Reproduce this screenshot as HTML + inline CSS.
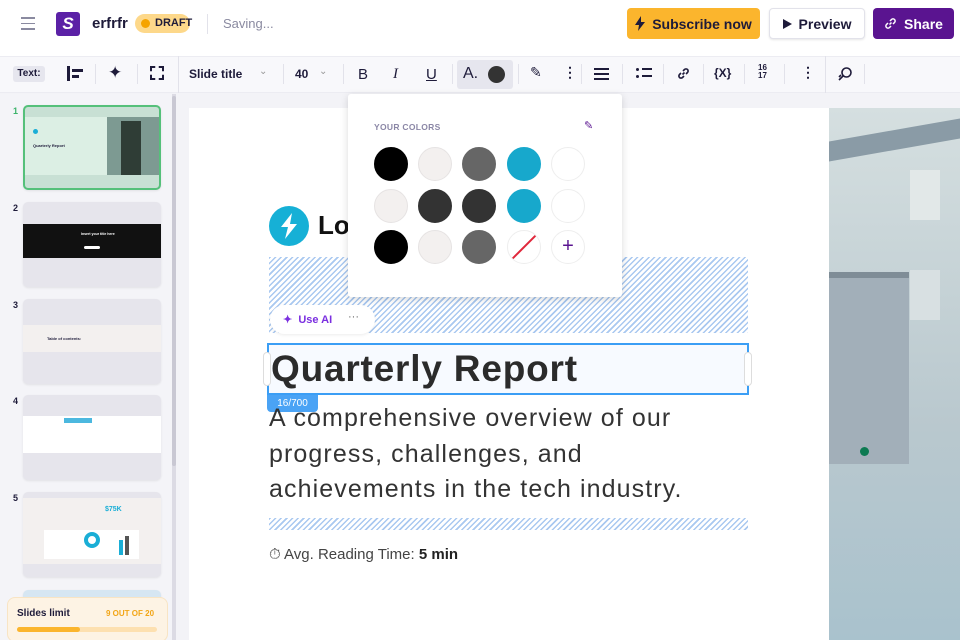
<!DOCTYPE html>
<html style="width:960px;height:640px;overflow:hidden"><head><meta charset="utf-8"><style>
*{box-sizing:border-box;margin:0;padding:0}
body{width:960px;height:640px;overflow:hidden;position:relative;font-family:"Liberation Sans",sans-serif;background:#f3f3f7;color:#1e1b3a}
.abs{position:absolute}
.top{left:0;top:0;width:960px;height:56px;background:#fff}
.tb{left:0;top:56px;width:960px;height:37px;background:#f8f8fb;border-top:1px solid #ececf2;border-bottom:1px solid #ececf2}
.btn{position:absolute;top:8px;height:31px;border-radius:4px;font-weight:bold;font-size:14px;display:flex;align-items:center;justify-content:center;gap:7px}
.ico{position:absolute;top:64px;font-size:14px;color:#1e1b3a}
.sep{position:absolute;top:64px;width:1px;height:20px;background:#e2e2ea}
.th{position:absolute;left:23px;width:138px;height:85px;border-radius:5px;background:#e6e5ec;overflow:hidden;box-shadow:0 1px 2px rgba(0,0,0,.08)}
.num{position:absolute;left:13px;font-size:9px;font-weight:bold;color:#1e1b3a}
.hatch{background:repeating-linear-gradient(135deg,#a9c8f0 0 1.5px,#fff 1.5px 4px)}
.sw{position:absolute;width:34px;height:34px;border-radius:50%;border:1px solid #e6e3e3}
</style></head><body>
<div class="abs top"></div>
<div class="abs" style="left:21px;top:17px;width:14px">
<div style="height:1.5px;background:#8a8aa0;margin-bottom:4px"></div><div style="height:1.5px;background:#8a8aa0;margin-bottom:4px"></div><div style="height:1.5px;background:#8a8aa0"></div></div>
<div class="abs" style="left:56px;top:12px;width:24px;height:24px;background:#5b21a6;border-radius:3px;color:#fff;font-weight:bold;font-style:italic;font-size:17px;text-align:center;line-height:24px">S</div>
<div class="abs" style="left:92px;top:15px;font-size:15px;font-weight:bold">erfrfr</div>
<div class="abs" style="left:135px;top:14px;width:55px;height:19px;background:#fdd88a;border-radius:10px;font-size:11px;font-weight:bold;line-height:19px;padding-left:20px">DRAFT<span style="position:absolute;left:6px;top:5px;width:9px;height:9px;border-radius:50%;background:#f5a300"></span></div>
<div class="abs" style="left:207px;top:14px;width:1px;height:20px;background:#e2e2ea"></div>
<div class="abs" style="left:223px;top:16px;font-size:13px;color:#8a8aa0">Saving...</div>
<div class="btn" style="left:627px;width:133px;background:#fbb52d;color:#1e1b3a"><svg width="10" height="15" viewBox="0 0 10 15"><path d="M6 0L0 9h4l-1 6 7-9H6z" fill="#1e1b3a"/></svg>Subscribe now</div>
<div class="btn" style="left:769px;width:96px;background:#fff;border:1px solid #e2e2ea;box-shadow:0 1px 2px rgba(0,0,0,.1)"><svg width="9" height="10"><path d="M0 0L9 5 0 10z" fill="#1e1b3a"/></svg>Preview</div>
<div class="btn" style="left:873px;width:81px;background:#5a1490;color:#fff"><svg width="13" height="13" viewBox="0 0 13 13" fill="none" stroke="#fff" stroke-width="1.5"><path d="M5.5 7.5l2-2M4 6L2.5 7.5a2 2 0 003 3L7 9M9 7l1.5-1.5a2 2 0 00-3-3L6 4"/></svg>Share</div>

<div class="abs tb"></div>
<div class="abs" style="left:13px;top:66px;width:32px;height:16px;background:#e6e6ee;border-radius:3px;font-size:10px;font-weight:bold;text-align:center;line-height:16px">Text:</div>
<div class="ico" style="left:67px;top:66px;width:3px;height:15px;background:#1e1b3a"></div>
<div class="ico" style="left:72px;top:69px;width:11px;height:3px;background:#1e1b3a"></div>
<div class="ico" style="left:72px;top:75px;width:7px;height:3px;background:#1e1b3a"></div>
<div class="sep" style="left:95px"></div>
<div class="ico" style="left:108px;top:63px;font-size:17px">✦</div>
<div class="sep" style="left:137px"></div>
<div class="ico" style="left:150px;top:66px;width:14px;height:14px;border:2px dashed #1e1b3a"></div>
<div class="abs" style="left:178px;top:56px;width:1px;height:37px;background:#e2e2ea"></div>
<div class="ico" style="left:189px;top:67px;font-size:12px;font-weight:bold">Slide title</div>
<div class="ico" style="left:259px;top:66px;color:#999;font-size:10px">⌄</div>
<div class="sep" style="left:283px"></div>
<div class="ico" style="left:295px;top:67px;font-size:12px;font-weight:bold">40</div>
<div class="ico" style="left:319px;top:66px;color:#999;font-size:10px">⌄</div>
<div class="sep" style="left:343px"></div>
<div class="ico" style="left:358px;top:66px;font-size:15px">B</div>
<div class="ico" style="left:393px;top:66px;font-size:15px;font-style:italic;font-family:'Liberation Serif',serif">I</div>
<div class="ico" style="left:426px;top:66px;font-size:15px;text-decoration:underline">U</div>
<div class="sep" style="left:452px"></div>
<div class="abs" style="left:457px;top:60px;width:56px;height:29px;background:#e6e6ee;border-radius:3px"></div>
<div class="ico" style="left:463px;top:65px;font-size:16px">A.</div>
<div class="abs" style="left:488px;top:66px;width:17px;height:17px;border-radius:50%;background:#333"></div>
<div class="sep" style="left:518px"></div>
<div class="ico" style="left:530px;top:64px;font-size:14px">✎</div>
<div class="ico" style="left:563px;top:64px;font-size:14px;font-weight:bold">⋮</div>
<div class="sep" style="left:581px"></div>
<div class="ico" style="left:594px;top:68px;width:15px;height:12px;border-top:2px solid #1e1b3a;border-bottom:2px solid #1e1b3a"></div>
<div class="ico" style="left:594px;top:73px;width:15px;height:2px;background:#1e1b3a"></div>
<div class="sep" style="left:622px"></div>
<div class="ico" style="left:636px;top:68px;width:3px;height:3px;background:#1e1b3a;border-radius:50%"></div>
<div class="ico" style="left:636px;top:75px;width:3px;height:3px;background:#1e1b3a;border-radius:50%"></div>
<div class="ico" style="left:642px;top:68px;width:10px;height:2px;background:#1e1b3a"></div>
<div class="ico" style="left:642px;top:75px;width:10px;height:2px;background:#1e1b3a"></div>
<div class="sep" style="left:663px"></div>
<svg class="ico" style="left:677px;top:67px" width="13" height="13" viewBox="0 0 13 13" fill="none" stroke="#1e1b3a" stroke-width="1.6"><path d="M5.5 7.5l2-2M4 6L2.5 7.5a2 2 0 003 3L7 9M9 7l1.5-1.5a2 2 0 00-3-3L6 4"/></svg>
<div class="sep" style="left:703px"></div>
<div class="ico" style="left:714px;top:66px;font-size:12px;font-weight:bold">{X}</div>
<div class="sep" style="left:744px"></div>
<div class="ico" style="left:758px;top:64px;font-size:8px;font-weight:bold;line-height:8px">16<br>17</div>
<div class="sep" style="left:784px"></div>
<div class="ico" style="left:801px;top:64px;font-size:14px;font-weight:bold">⋮</div>
<div class="abs" style="left:825px;top:56px;width:1px;height:37px;background:#e2e2ea"></div>
<svg class="ico" style="left:837px;top:66px" width="16" height="16" viewBox="0 0 16 16" fill="none" stroke="#1e1b3a" stroke-width="1.6"><circle cx="9.5" cy="6.5" r="4.5"/><path d="M6 10l-4 4M4 9l-2 2"/></svg>
<div class="sep" style="left:864px"></div>

<!-- sidebar -->
<div class="abs" style="left:0;top:94px;width:172px;height:546px;background:#f4f4f8"></div>
<div class="abs" style="left:172px;top:94px;width:4px;height:546px;background:#dcdbe4"></div>
<div class="abs" style="left:172px;top:96px;width:4px;height:370px;background:#c9c8d3;border-radius:2px"></div>
<div class="num" style="top:106px;color:#3cb36b">1</div>
<div class="th" style="top:105px;border:2px solid #55c07a;background:#c8e0d4">
<div class="abs" style="left:0;top:10px;width:82px;height:58px;background:#dcefe4"></div>
<div class="abs" style="left:82px;top:10px;width:54px;height:58px;background:#7d9a92"></div>
<div class="abs" style="left:96px;top:14px;width:20px;height:54px;background:#2f3d36"></div>
<div class="abs" style="left:8px;top:22px;width:5px;height:5px;border-radius:50%;background:#1aaed6"></div>
<div class="abs" style="left:8px;top:36px;font-size:4px;font-weight:bold">Quarterly Report</div>
</div>
<div class="num" style="top:203px">2</div>
<div class="th" style="top:202px"><div class="abs" style="left:0;top:22px;width:138px;height:34px;background:#111"></div>
<div class="abs" style="left:58px;top:30px;font-size:3.5px;color:#fff;font-weight:bold">Insert your title here</div>
<div class="abs" style="left:61px;top:44px;width:16px;height:3px;background:#fff;border-radius:2px"></div></div>
<div class="num" style="top:300px">3</div>
<div class="th" style="top:299px"><div class="abs" style="left:0;top:26px;width:138px;height:27px;background:#f3f0ef"></div>
<div class="abs" style="left:24px;top:37px;font-size:4px;font-weight:bold">Table of contents:</div></div>
<div class="num" style="top:396px">4</div>
<div class="th" style="top:395px"><div class="abs" style="left:0;top:21px;width:138px;height:37px;background:#fff"></div>
<div class="abs" style="left:41px;top:23px;width:28px;height:5px;background:#4cb8df"></div></div>
<div class="num" style="top:493px">5</div>
<div class="th" style="top:492px"><div class="abs" style="left:0;top:6px;width:138px;height:66px;background:#f3f0ef"></div>
<div class="abs" style="left:21px;top:38px;width:95px;height:29px;background:#fff"></div>
<div class="abs" style="left:82px;top:14px;font-size:7px;font-weight:bold;color:#1aaed6">$75K</div>
<div class="abs" style="left:61px;top:40px;width:16px;height:16px;border-radius:50%;border:4px solid #1aaed6"></div>
<div class="abs" style="left:96px;top:48px;width:4px;height:15px;background:#1aaed6"></div>
<div class="abs" style="left:102px;top:44px;width:4px;height:19px;background:#555"></div></div>
<div class="th" style="top:590px;height:50px;border-radius:5px 5px 0 0;background:#d6e6f2"></div>
<div class="abs" style="left:7px;top:597px;width:161px;height:45px;background:#fdf3e4;border-radius:8px;border:1px solid #f8e4c4"></div>
<div class="abs" style="left:17px;top:608px;font-size:10px;font-weight:bold">Slides limit</div>
<div class="abs" style="left:106px;top:609px;font-size:8px;font-weight:bold;color:#f2a516">9 OUT OF 20</div>
<div class="abs" style="left:17px;top:627px;width:140px;height:5px;background:#fde0b0;border-radius:3px"><div style="width:63px;height:5px;background:#fbb52d;border-radius:3px"></div></div>

<!-- slide -->
<div class="abs" style="left:189px;top:108px;width:640px;height:532px;background:#fff"></div>
<div class="abs" style="left:829px;top:108px;width:131px;height:532px;background:linear-gradient(180deg,#d5dfe0,#b9c8ce 60%,#a9c2cd)"></div>
<div class="abs" style="left:829px;top:130px;width:131px;height:20px;background:#8a9ba6;transform:skewY(-10deg)"></div>
<div class="abs" style="left:829px;top:272px;width:80px;height:192px;background:#a2afb9;border-top:6px solid #7f8d97"></div>
<div class="abs" style="left:860px;top:447px;width:9px;height:9px;border-radius:50%;background:#0d7a52"></div>
<div class="abs" style="left:910px;top:170px;width:30px;height:50px;background:#e2e8e8"></div>
<div class="abs" style="left:910px;top:270px;width:30px;height:50px;background:#d8e0e2"></div>

<div class="abs" style="left:269px;top:206px;width:40px;height:40px;border-radius:50%;background:#16b0d6"></div>
<svg class="abs" style="left:279px;top:213px" width="20" height="26" viewBox="0 0 20 26"><path d="M13 0L2 14h7l-3 12 12-15h-7z" fill="#fff"/></svg>
<div class="abs" style="left:318px;top:210px;font-size:26px;font-weight:bold;color:#111">Lo</div>
<div class="abs hatch" style="left:269px;top:257px;width:479px;height:76px"></div>
<div class="abs" style="left:270px;top:305px;width:105px;height:29px;background:#fff;border-radius:15px;box-shadow:0 1px 3px rgba(0,0,0,.08)"></div>
<div class="abs" style="left:283px;top:313px;font-size:11px;color:#7b2fe0;font-weight:bold">✦ &nbsp;Use AI</div>
<div class="abs" style="left:348px;top:311px;font-size:11px;color:#666">···</div>
<div class="abs" style="left:267px;top:343px;width:482px;height:52px;border:2px solid #3b9ef5;background:#f7faff"></div>
<div class="abs" style="left:263px;top:352px;width:8px;height:34px;background:#fff;border:1px solid #ddd;border-radius:4px"></div>
<div class="abs" style="left:744px;top:352px;width:8px;height:34px;background:#fff;border:1px solid #ddd;border-radius:4px"></div>
<div class="abs" style="left:271px;top:348px;font-size:37px;font-weight:bold;color:#2b2b2b;letter-spacing:0.8px">Quarterly Report</div>
<div class="abs" style="left:267px;top:395px;width:51px;height:17px;background:#4aa3f5;border-radius:0 0 4px 4px;color:#fff;font-size:10px;text-align:center;line-height:17px">16/700</div>
<div class="abs" style="left:269px;top:401px;font-size:25px;line-height:35.5px;color:#333;letter-spacing:1.1px">A comprehensive overview of our<br>progress, challenges, and<br>achievements in the tech industry.</div>
<div class="abs hatch" style="left:269px;top:518px;width:479px;height:12px"></div>
<div class="abs" style="left:269px;top:546px;font-size:15px;color:#444">⏱ Avg. Reading Time: <b style="color:#222">5 min</b></div>

<!-- popup -->
<div class="abs" style="left:348px;top:94px;width:274px;height:203px;background:#fff;border-radius:3px;box-shadow:0 2px 8px rgba(0,0,0,.15)"></div>
<div class="abs" style="left:374px;top:122px;font-size:8.5px;font-weight:bold;color:#8b87a6;letter-spacing:.3px">YOUR COLORS</div>
<div class="abs" style="left:584px;top:119px;font-size:11px;color:#5a1490">✎</div>
<div class="sw" style="left:374px;top:147px;background:#000;border-color:#000"></div>
<div class="sw" style="left:418px;top:147px;background:#f3f0ef"></div>
<div class="sw" style="left:462px;top:147px;background:#666;border-color:#666"></div>
<div class="sw" style="left:507px;top:147px;background:#17a8cc;border-color:#17a8cc"></div>
<div class="sw" style="left:551px;top:147px;background:#fff;border-color:#eee"></div>
<div class="sw" style="left:374px;top:189px;background:#f3f0ef"></div>
<div class="sw" style="left:418px;top:189px;background:#333;border-color:#333"></div>
<div class="sw" style="left:462px;top:189px;background:#333;border-color:#333"></div>
<div class="sw" style="left:507px;top:189px;background:#17a8cc;border-color:#17a8cc"></div>
<div class="sw" style="left:551px;top:189px;background:#fff;border-color:#eee"></div>
<div class="sw" style="left:374px;top:230px;background:#000;border-color:#000"></div>
<div class="sw" style="left:418px;top:230px;background:#f3f0ef"></div>
<div class="sw" style="left:462px;top:230px;background:#666;border-color:#666"></div>
<div class="sw" style="left:507px;top:230px;background:#fff;border-color:#eee;overflow:hidden"><div style="position:absolute;left:-4px;top:15px;width:40px;height:1.5px;background:#e0283c;transform:rotate(-45deg)"></div></div>
<div class="sw" style="left:551px;top:230px;background:#fff;border-color:#eee;color:#5a1490;font-size:20px;text-align:center;line-height:31px">+</div>
</body></html>
